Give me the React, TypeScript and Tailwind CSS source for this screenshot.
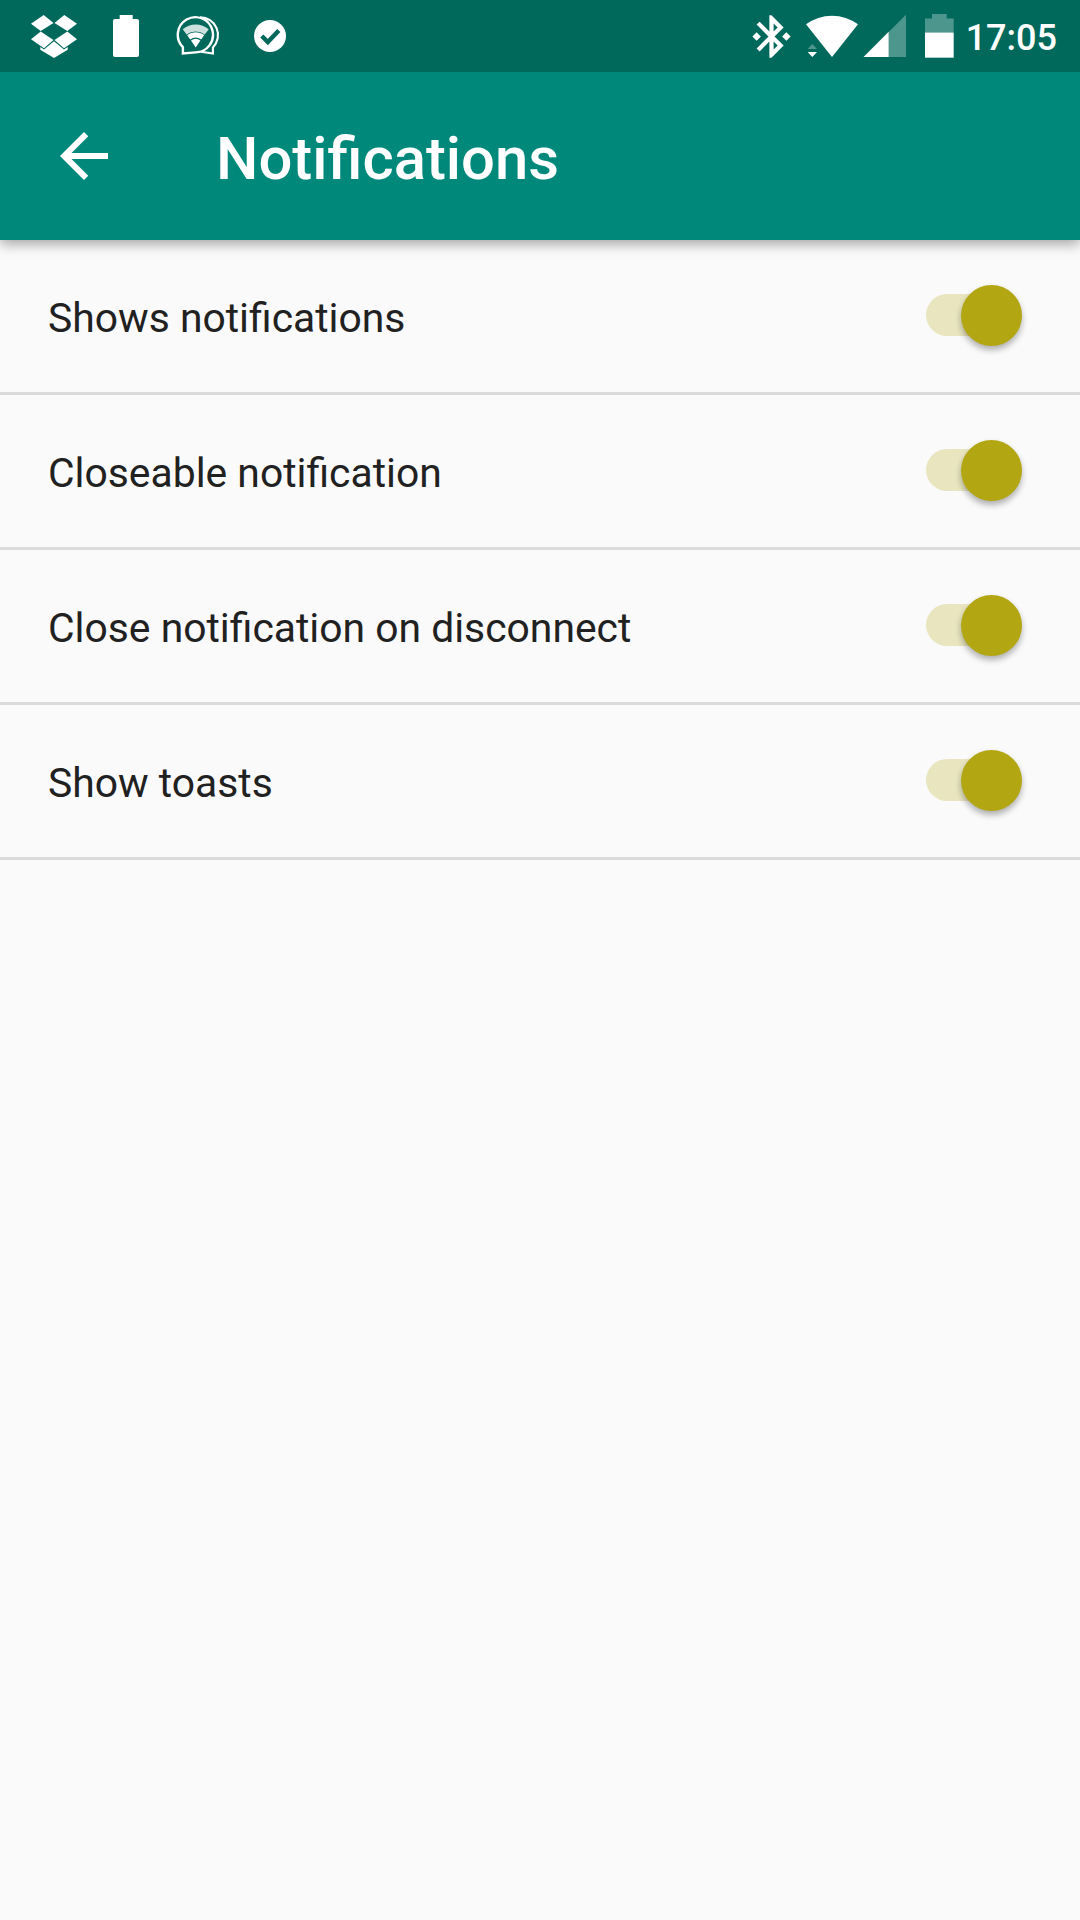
import { useState } from "react";

function DropboxIcon() {
  return (
    <svg viewBox="30 0 48 72" className="w-12 h-[72px] shrink-0 fill-white">
      <path d="M31 23.7 43.7 15l9.8 8-12.8 8zM77 23.7 64.3 15l-9.8 8 12.8 8zM40.7 31.6l12.8 8.3L44 48.3l-13-9zM67.3 31.6l-12.8 8.3 9.5 8.4 13-9z" />
      <path d="M40.3 47 44 49.4l10-8.2 10 8.2 3.7-2.4v2.7L54 57.9l-13.7-8.2z" />
    </svg>
  );
}

function BatteryFullIcon() {
  return (
    <svg viewBox="112 0 28 72" className="w-7 h-[72px] shrink-0 fill-white">
      <path d="M119.7 15h13v4h4.3a2 2 0 0 1 2 2v34a2 2 0 0 1-2 2h-22a2 2 0 0 1-2-2V21a2 2 0 0 1 2-2h4.7z" />
    </svg>
  );
}

function WifiBubbleIcon() {
  return (
    <svg viewBox="176 0 44 72" className="w-11 h-[72px] shrink-0">
      <g fill="none" stroke="white" strokeWidth="2.4">
        <path d="M182.9 47.2A17.6 17.6 0 1 1 195.6 52.4L182.9 53.5z" />
        <path d="M200 17.4A17.6 17.6 0 0 1 212.9 47.4V53.5L201 51.8" strokeWidth="2.1" />
      </g>
      <path d="M182.7 29.3a20 20 0 0 1 26 0l-3.9 5.2a15 15 0 0 0-18.2 0z" fill="#cce1de" />
      <path d="M187.1 35.1a14 14 0 0 1 17.2 0l-3.1 4.3a9.5 9.5 0 0 0-11 0zM191 40.4a8.5 8.5 0 0 1 9.4 0L195.7 47.5z" fill="white" />
    </svg>
  );
}

function CheckIcon() {
  return (
    <svg viewBox="253 0 34 72" className="w-[34px] h-[72px] shrink-0">
      <circle cx="270" cy="36" r="16" fill="white" />
      <path d="m261.8 36 6 6 11-11.5" fill="none" stroke="#00695c" strokeWidth="4.4" />
    </svg>
  );
}

function BluetoothIcon() {
  return (
    <svg viewBox="0 0 24 24" className="w-[51px] h-[51px] shrink-0 fill-white">
      <path d="M7 12l-2-2-2 2 2 2 2-2zm10.71-4.29L12 2h-1v7.59L6.41 5 5 6.41 10.59 12 5 17.59 6.41 19 11 14.41V22h1l5.71-5.71-4.3-4.29 4.3-4.29zM13 5.83l1.88 1.88L13 9.59V5.83zm1.88 10.46L13 18.17v-3.76l1.88 1.88zM19 10l-2 2 2 2 2-2-2-2z" />
    </svg>
  );
}

function WifiIcon() {
  return (
    <svg viewBox="805 0 54 72" className="w-[54px] h-[72px] shrink-0 fill-white">
      <path d="M806 24.3a43.6 43.6 0 0 1 52 0L832 57z" />
      <path d="M807.7 49l4.6-5 4.7 5z" fillOpacity=".3" />
      <path d="M807.7 52h9.3l-4.7 5z" />
    </svg>
  );
}

function SignalIcon() {
  return (
    <svg viewBox="863 0 44 72" className="w-11 h-[72px] shrink-0 fill-white">
      <path d="M888.7 32 906 14.7V57h-17.3z" fillOpacity=".3" />
      <path d="M863.5 57l25.2-25.2V57z" />
    </svg>
  );
}

function BatteryIcon() {
  return (
    <svg viewBox="925 0 29 72" className="w-[29px] h-[72px] shrink-0 fill-white">
      <path d="M925 18.5h7V14h14.7v4.5h7v14H925z" fillOpacity=".3" />
      <path d="M925 32.5h28.7v25.2H925z" />
    </svg>
  );
}

function StatusBar() {
  return (
    <div className="relative z-10 flex h-[72px] items-center bg-[#00695c] pl-[30px]">
      <DropboxIcon />
      <div className="ml-[34px] flex"><BatteryFullIcon /></div>
      <div className="ml-9 flex"><WifiBubbleIcon /></div>
      <div className="ml-[33px] flex"><CheckIcon /></div>
      <div className="ml-auto flex items-center pr-[23px]">
        <BluetoothIcon />
        <div className="ml-2 flex"><WifiIcon /></div>
        <div className="ml-1 flex"><SignalIcon /></div>
        <div className="ml-[18px] flex"><BatteryIcon /></div>
        <span className="ml-3 pt-[3px] text-[36px] leading-none font-medium text-white">17:05</span>
      </div>
    </div>
  );
}

function AppBar() {
  return (
    <header className="relative flex h-[168px] items-center bg-[#00897b] pl-12 shadow-[0_4px_12px_rgba(0,0,0,0.35)]">
      <button aria-label="Back">
        <svg viewBox="0 0 24 24" className="size-[72px] fill-white">
          <path d="M20 11H7.83l5.59-5.59L12 4l-8 8 8 8 1.41-1.41L7.83 13H20v-2z" />
        </svg>
      </button>
      <h1 className="ml-24 pt-[5px] text-[59.8px] leading-[60px] font-medium text-white">Notifications</h1>
    </header>
  );
}

function SettingRow({ label }: { label: string }) {
  const [on, setOn] = useState(true);

  return (
    <div className="flex h-[155px] items-center justify-between border-b-[3px] border-[#dbdbdb] pr-[58px] pl-12">
      <span className="pt-[4px] text-[40.85px] leading-[42px] text-[#212121]">{label}</span>
      <button
        role="switch"
        aria-checked={on}
        aria-label={label}
        onClick={() => setOn(!on)}
        className={`mb-0.5 flex h-[42px] w-24 items-center rounded-full ${on ? "justify-end bg-[#e8e5bf]" : "justify-start bg-[#b9b9b9]"}`}
      >
        <span className={`mt-px size-[61px] shrink-0 rounded-full shadow-[0_4px_6px_rgba(0,0,0,0.3)] ${on ? "bg-[#b3a613]" : "bg-[#f1f1f1]"}`} />
      </button>
    </div>
  );
}

const settings = [
  "Shows notifications",
  "Closeable notification",
  "Close notification on disconnect",
  "Show toasts",
];

export default function App() {
  return (
    <div className="min-h-screen w-full bg-[#fafafa] font-[Roboto,sans-serif]">
      <StatusBar />
      <AppBar />
      <main>
        {settings.map((label) => (
          <SettingRow key={label} label={label} />
        ))}
      </main>
    </div>
  );
}
